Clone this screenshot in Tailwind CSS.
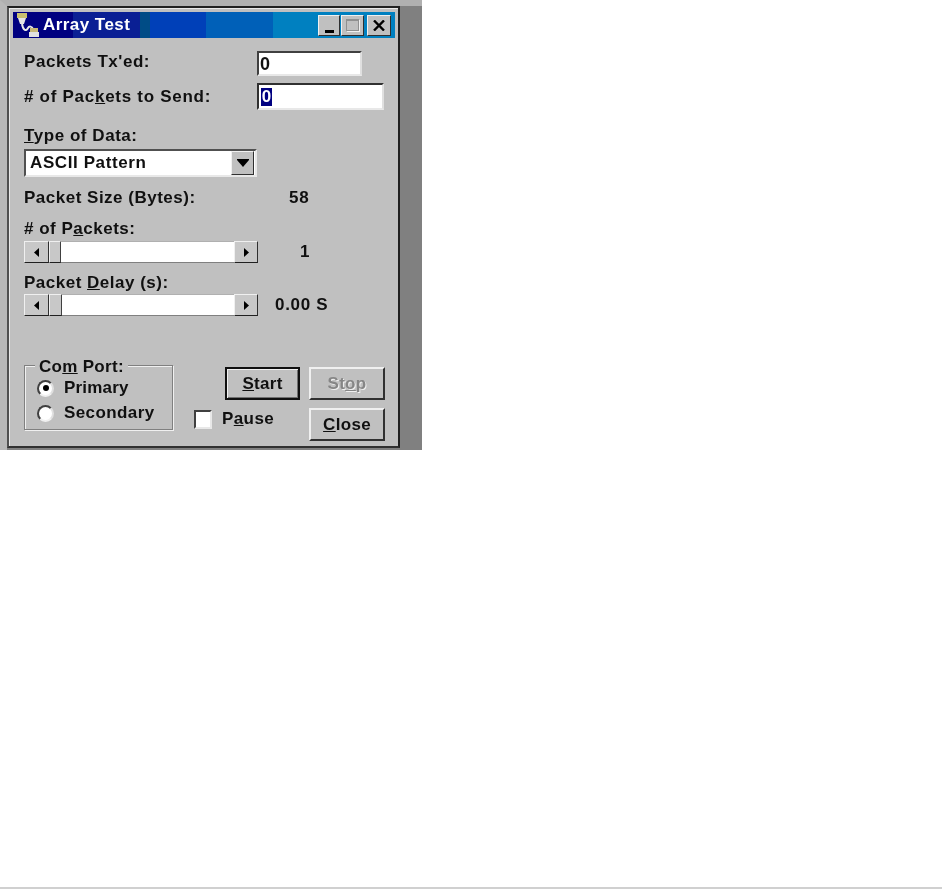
<!DOCTYPE html>
<html lang="en">
<head>
  <meta charset="UTF-8">
  <title>Array Test</title>
  <script src="https://cdn.jsdelivr.net/npm/@tailwindcss/browser@4"></script>
</head>
<body class="bg-white h-[890px] overflow-hidden flex flex-col font-['Liberation_Sans',sans-serif] font-bold text-[17px] leading-[20px] text-[#101010]">
  <div class="flex-1">
    <!-- desktop strip behind the dialog -->
    <div class="w-[422px] h-[450px] bg-[#808080] border-t-[6px] border-l-[7px] border-t-[#b0b0b0] border-l-[#b8b8b8]">
      <div class="w-[393px] h-[442px] bg-[#c0c0c0] border-2 border-[#202020] border-l-[#505050] border-b-[#303030] shadow-[inset_1px_1px_0_#e8e8e8] pt-[4px] pl-[4px] pr-[3px] blur-[0.45px]">

        <!-- title bar -->
        <div class="h-[26px] flex items-center pl-[2px] pr-[4px] bg-[linear-gradient(90deg,#000080_0,#000080_60px,#0a1f94_60px,#0a1f94_127px,#004c86_127px,#004c86_137px,#0040b8_137px,#0040b8_193px,#0060b8_193px,#0060b8_260px,#0080c0_260px)]">
          <svg class="w-[26px] h-[26px] shrink-0" viewBox="0 0 26 26">
            <rect x="2" y="1" width="10" height="5" fill="#c8c070"/>
            <path d="M3 6 H11 L9 12 H5 Z" fill="#e4e4e4"/>
            <path d="M7 12 C8 18 11 20 13 16 C14 14 17 14 18 17" fill="none" stroke="#e8e8e8" stroke-width="2"/>
            <rect x="15" y="16" width="8" height="4" fill="#c8b878"/>
            <rect x="14" y="20" width="10" height="5" fill="#e0e0e0"/>
          </svg>
          <span class="ml-[2px] text-white tracking-[0.45px]">Array Test</span>
          <div class="ml-auto flex">
            <div class="w-[22px] h-[21px] bg-[#c0c0c0] border border-t-[#f0f0f0] border-l-[#f0f0f0] border-r-[#303030] border-b-[#303030] flex items-end justify-center pb-[2px]">
              <div class="w-[9px] h-[3px] bg-black"></div>
            </div>
            <div class="ml-[1px] w-[23px] h-[21px] bg-[#c0c0c0] border border-t-[#f0f0f0] border-l-[#f0f0f0] border-r-[#303030] border-b-[#303030] flex items-center justify-center">
              <div class="w-[13px] h-[12px] border border-[#909090] border-t-2 shadow-[1px_1px_0_#f0f0f0]"></div>
            </div>
            <div class="ml-[3px] w-[24px] h-[21px] bg-[#c0c0c0] border border-t-[#f0f0f0] border-l-[#f0f0f0] border-r-[#303030] border-b-[#303030] flex items-center justify-center">
              <svg class="w-[12px] h-[11px]" viewBox="0 0 12 11"><path d="M1 0.5 L11 10.5 M11 0.5 L1 10.5" stroke="#000" stroke-width="2.4"/></svg>
            </div>
          </div>
        </div>

        <!-- form body -->
        <div class="pl-[11px] pt-[13px]">
          <div class="flex h-[25px]">
            <div class="w-[233px] pt-[1px] tracking-[0.55px]">Packets Tx'ed:</div>
            <div class="w-[105px] h-[25px] bg-white border-2 border-t-[#404040] border-l-[#404040] border-r-[#e0e0e0] border-b-[#e8e8e8] pl-[1px] text-[18px] leading-[22px]">0</div>
          </div>
          <div class="flex h-[27px] mt-[7px]">
            <div class="w-[233px] pt-[4px] tracking-[0.72px]"># of Pac<span class="underline">k</span>ets to Send:</div>
            <div class="w-[127px] h-[27px] bg-white border-2 border-t-[#303030] border-l-[#303030] border-r-[#e0e0e0] border-b-[#e8e8e8] pl-[2px] pt-[3px]">
              <span class="block w-[11px] h-[18px] bg-[#000080] text-white text-[17px] leading-[18px] text-center">0</span>
            </div>
          </div>

          <div class="mt-[16px] h-[20px] tracking-[0.55px]"><span class="underline">T</span>ype of Data:</div>
          <div class="w-[233px] h-[28px] mt-[3px] bg-white border-2 border-t-[#505050] border-l-[#505050] border-r-[#e8e8e8] border-b-[#e8e8e8] flex items-center pl-[4px] pr-[1px]">
            <span class="tracking-[0.6px]">ASCII Pattern</span>
            <div class="ml-auto w-[23px] h-[24px] bg-[#c0c0c0] border border-t-[#f0f0f0] border-l-[#f0f0f0] border-r-[#303030] border-b-[#303030] flex items-center justify-center">
              <svg class="w-[12px] h-[8px]" viewBox="0 0 12 8"><path d="M0 0 H12 V1 L6 8 L0 1 Z" fill="#000"/></svg>
            </div>
          </div>

          <div class="flex mt-[11px] h-[20px]">
            <div class="w-[265px] tracking-[0.5px]">Packet Size (Bytes):</div>
            <div class="tracking-[0.8px]">58</div>
          </div>

          <div class="mt-[11px] h-[20px] tracking-[0.5px]"># of P<span class="underline">a</span>ckets:</div>
          <div class="flex items-center h-[22px] mt-[2px]">
            <div class="w-[234px] h-[22px] flex border-b border-b-[#808080]">
              <div class="w-[25px] h-[22px] bg-[#c8c8c8] border border-t-[#f0f0f0] border-l-[#f0f0f0] border-r-[#303030] border-b-[#202020] flex items-center justify-center"><svg class="w-[5px] h-[9px]" viewBox="0 0 5 9"><path d="M5 0 V9 L0 4.5 Z" fill="#000"/></svg></div>
              <div class="w-[12px] h-[22px] bg-[#c8c8c8] border border-t-[#f0f0f0] border-l-[#f0f0f0] border-r-[#404040] border-b-[#202020]"></div>
              <div class="flex-1 h-[21px] bg-white border-t border-t-[#b0b0b0]"></div>
              <div class="w-[24px] h-[22px] bg-[#c8c8c8] border border-t-[#f0f0f0] border-l-[#f0f0f0] border-r-[#303030] border-b-[#202020] flex items-center justify-center"><svg class="w-[5px] h-[9px]" viewBox="0 0 5 9"><path d="M0 0 V9 L5 4.5 Z" fill="#000"/></svg></div>
            </div>
            <div class="ml-[42px]">1</div>
          </div>

          <div class="mt-[10px] h-[20px] tracking-[0.5px]">Packet <span class="underline">D</span>elay (s):</div>
          <div class="flex items-center h-[22px] mt-[1px]">
            <div class="w-[234px] h-[22px] flex border-b border-b-[#808080]">
              <div class="w-[25px] h-[22px] bg-[#c8c8c8] border border-t-[#f0f0f0] border-l-[#f0f0f0] border-r-[#303030] border-b-[#202020] flex items-center justify-center"><svg class="w-[5px] h-[9px]" viewBox="0 0 5 9"><path d="M5 0 V9 L0 4.5 Z" fill="#000"/></svg></div>
              <div class="w-[13px] h-[22px] bg-[#c8c8c8] border border-t-[#f0f0f0] border-l-[#f0f0f0] border-r-[#404040] border-b-[#202020]"></div>
              <div class="flex-1 h-[21px] bg-white border-t border-t-[#b0b0b0]"></div>
              <div class="w-[24px] h-[22px] bg-[#c8c8c8] border border-t-[#f0f0f0] border-l-[#f0f0f0] border-r-[#303030] border-b-[#202020] flex items-center justify-center"><svg class="w-[5px] h-[9px]" viewBox="0 0 5 9"><path d="M0 0 V9 L5 4.5 Z" fill="#000"/></svg></div>
            </div>
            <div class="ml-[17px] tracking-[0.7px]">0.00 S</div>
          </div>

          <!-- bottom controls -->
          <div class="flex mt-[49px]">
            <fieldset class="relative w-[149px] h-[65px] border border-[#808080] shadow-[1px_1px_0_#f0f0f0,inset_1px_1px_0_#f0f0f0]">
              <span class="absolute left-[10px] top-[-9px] bg-[#c0c0c0] px-[4px] tracking-[0.3px]">Co<span class="underline">m</span> Port:</span>
              <div class="flex items-center pl-[12px] pt-[12px] h-[32px]">
                <div class="w-[17px] h-[17px] rounded-full bg-white border-2 border-t-[#404040] border-l-[#404040] border-r-[#e0e0e0] border-b-[#f0f0f0] flex items-center justify-center">
                  <div class="w-[6px] h-[6px] rounded-full bg-black"></div>
                </div>
                <span class="ml-[10px] tracking-[0.2px]">Primary</span>
              </div>
              <div class="flex items-center pl-[12px] pt-[6px] h-[26px] mt-[-1px]">
                <div class="w-[17px] h-[17px] rounded-full bg-white border-2 border-t-[#404040] border-l-[#404040] border-r-[#e0e0e0] border-b-[#f0f0f0]"></div>
                <span class="ml-[10px] tracking-[0.4px]">Secondary</span>
              </div>
            </fieldset>

            <div class="ml-[21px] w-[191px] mt-[2px]">
              <div class="flex justify-end">
                <button class="w-[75px] h-[33px] bg-[#c0c0c0] border-2 border-[#101010] shadow-[inset_1px_1px_0_#f0f0f0,inset_-1px_-1px_0_#707070] font-bold tracking-[0.3px]"><span class="underline">S</span>tart</button>
                <button class="ml-[9px] w-[76px] h-[33px] bg-[#c0c0c0] border-2 border-t-[#f0f0f0] border-l-[#f0f0f0] border-r-[#303030] border-b-[#303030] font-bold text-[#868686] [text-shadow:1px_1px_0_#f0f0f0] tracking-[0.3px]">St<span class="underline">o</span>p</button>
              </div>
              <div class="flex mt-[8px]">
                <div class="w-[18px] h-[19px] mt-[2px] bg-white border-2 border-t-[#404040] border-l-[#404040] border-r-[#e8e8e8] border-b-[#e8e8e8]"></div>
                <span class="ml-[10px] mt-[1px] tracking-[0.4px]">P<span class="underline">a</span>use</span>
                <button class="ml-auto w-[76px] h-[33px] bg-[#c0c0c0] border-2 border-t-[#f0f0f0] border-l-[#f0f0f0] border-r-[#303030] border-b-[#303030] font-bold tracking-[0.3px]"><span class="underline">C</span>lose</button>
              </div>
            </div>
          </div>
        </div>
      </div>
    </div>
  </div>
  <!-- page edge line -->
  <div class="h-[2px] mb-[1px] bg-[#d0d0d0]"></div>
</body>
</html>
